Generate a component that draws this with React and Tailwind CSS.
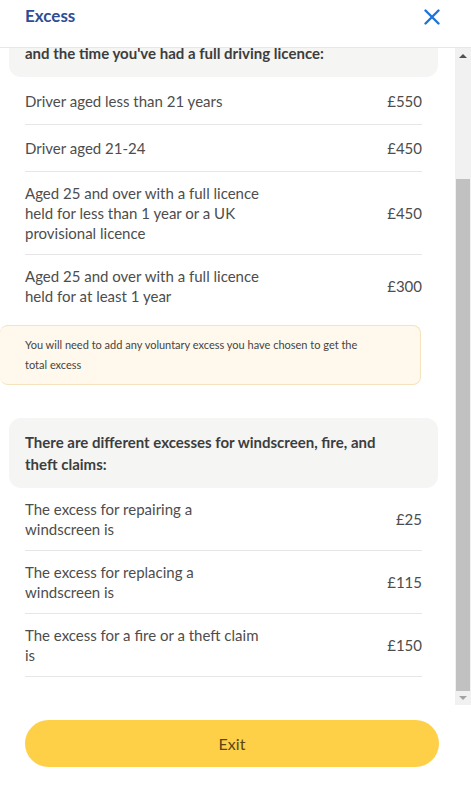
import { useEffect, useRef } from 'react'

const firstRows = [
  { label: ['Driver aged less than 21 years'], price: '£550' },
  { label: ['Driver aged 21-24'], price: '£450' },
  { label: ['Aged 25 and over with a full licence', 'held for less than 1 year or a UK', 'provisional licence'], price: '£450' },
  { label: ['Aged 25 and over with a full licence', 'held for at least 1 year'], price: '£300', last: true },
]

const secondRows = [
  { label: ['The excess for repairing a', 'windscreen is'], price: '£25' },
  { label: ['The excess for replacing a', 'windscreen is'], price: '£115' },
  { label: ['The excess for a fire or a theft claim', 'is'], price: '£150' },
]

function Row({ row }) {
  return (
    <div className={`mx-4 flex min-h-[47px] items-center justify-between py-[11px] ${row.last ? '' : 'border-b border-[#e6e6e6]'}`}>
      <div className="text-[15px] leading-5 text-[#4d4d4d]">
        {row.label.map((l, i) => (
          <div key={i}>{l}</div>
        ))}
      </div>
      <div className="text-[15px] leading-5 text-[#4d4d4d]">{row.price}</div>
    </div>
  )
}

function Heading({ lines }) {
  return (
    <div className="rounded-xl bg-[#f5f5f4] px-4 py-[13px]">
      {lines.map((l, i) => (
        <div key={i} className="text-[15px] font-bold leading-[22px] text-[#3d3d3d]">{l}</div>
      ))}
    </div>
  )
}

function Scrollbar() {
  return (
    <div className="flex w-4 flex-col bg-[#f1f1f1]">
      <div className="flex h-4 items-center justify-center">
        <div className="h-0 w-0 border-x-[4px] border-b-[4px] border-x-transparent border-b-[#505050]" />
      </div>
      <div className="flex flex-1 flex-col pt-[115px]">
        <div className="mx-[1px] flex-1 bg-[#c1c1c1]" />
      </div>
      <div className="flex h-[14px] items-center justify-center">
        <div className="h-0 w-0 border-x-[4px] border-t-[4px] border-x-transparent border-t-[#a3a3a3]" />
      </div>
    </div>
  )
}

export default function App() {
  const scrollRef = useRef(null)

  useEffect(() => {
    if (scrollRef.current) scrollRef.current.scrollTop = 57
  }, [])

  return (
    <div className="flex h-[806px] w-[471px] flex-col bg-white" style={{ fontFamily: 'Lato, "Open Sans", sans-serif' }}>
      <div className="flex h-[48px] items-start justify-between border-b border-[#e8e8e8] pl-[25px] pr-[31px] pt-[5px]">
        <span className="text-[17px] font-bold leading-[22px] text-[#2c4e96]">Excess</span>
        <svg width="16" height="16" viewBox="0 0 16 16" className="mt-[4px]">
          <path d="M1.5 1.5 L14.5 14.5 M14.5 1.5 L1.5 14.5" stroke="#1f74db" strokeWidth="2.4" strokeLinecap="round" />
        </svg>
      </div>

      <div className="flex h-[657px]">
        <div ref={scrollRef} className="flex-1 overflow-hidden">
          <div className="pb-8 pl-[9px] pr-[17px] pt-4">
            <Heading lines={['Your compulsory excess depends on your age', "and the time you've had a full driving licence:"]} />
            <div className="pt-[1px]">
              {firstRows.map((r, i) => (
                <Row key={i} row={r} />
              ))}
            </div>
            <div className="-ml-[9px] mr-[17px] mt-2 rounded-lg border border-l-0 border-[#f5e3bd] bg-[#fff8ec] py-[9px] pl-[25px] pr-4">
              <p className="text-[11px] leading-5 text-[#444]">
                You will need to add any voluntary excess you have chosen to get the
                <br />
                total excess
              </p>
            </div>
            <div className="mt-[33px]">
              <Heading lines={['There are different excesses for windscreen, fire, and', 'theft claims:']} />
            </div>
            {secondRows.map((r, i) => (
              <Row key={i} row={r} />
            ))}
          </div>
        </div>
        <Scrollbar />
      </div>

      <div className="px-[32px] pb-[39px] pl-[25px] pt-[15px]">
        <button className="flex h-[47px] w-full items-center justify-center rounded-full bg-[#fed048] text-[16px] text-[#5a4516]">
          Exit
        </button>
      </div>
    </div>
  )
}
